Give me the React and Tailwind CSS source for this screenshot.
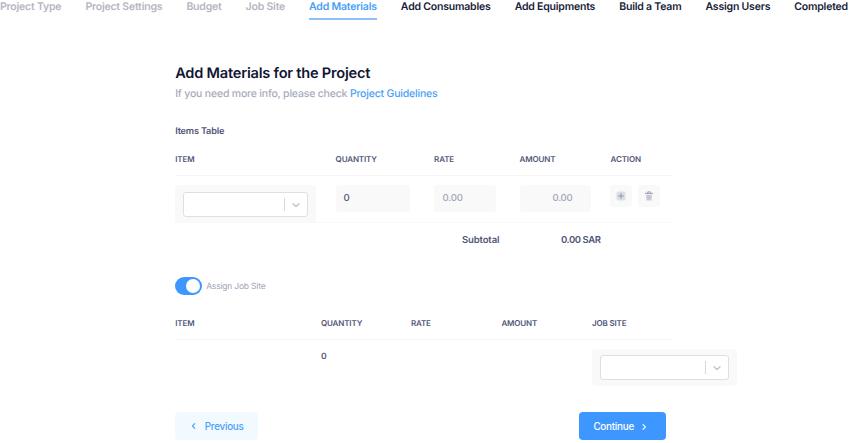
import React from "react";

const steps = [
  { label: "Project Type", state: "done" },
  { label: "Project Settings", state: "done" },
  { label: "Budget", state: "done" },
  { label: "Job Site", state: "done" },
  { label: "Add Materials", state: "current" },
  { label: "Add Consumables", state: "next" },
  { label: "Add Equipments", state: "next" },
  { label: "Build a Team", state: "next" },
  { label: "Assign Users", state: "next" },
  { label: "Completed", state: "next" },
];

const stepStyles = {
  done: "text-[#b5b5c3]",
  current: "text-[#4a9ff5] border-b-2 border-[#8cc2f8]",
  next: "text-[#181c3a]",
};

function Chevron({ className, d, strokeWidth = 1.4 }) {
  return (
    <svg viewBox="0 0 8 8" className={className} fill="none" stroke="currentColor" strokeWidth={strokeWidth} strokeLinecap="round" strokeLinejoin="round">
      <path d={d} />
    </svg>
  );
}

function Select({ className }) {
  return (
    <div className={`rounded-[4px] bg-[#f9f9f9] ${className}`}>
      <div className="flex h-[25px] items-center rounded-[3px] border border-[#dfdfe0] bg-white">
        <div className="flex-1" />
        <div className="h-[13px] w-px bg-[#d8d8d8]" />
        <div className="flex w-[22px] justify-center">
          <Chevron className="h-2 w-2 text-[#c4c4c4]" d="M1 2.8 4 5.6 7 2.8" />
        </div>
      </div>
    </div>
  );
}

function HeaderRow({ columns, labels }) {
  return (
    <div className={`grid h-[26px] w-[498px] border-b border-[#f6f6f7] text-[8px] leading-[18px] font-semibold tracking-[-0.13px] text-[#4f5578] ${columns}`}>
      {labels.map((label) => (
        <span key={label}>{label}</span>
      ))}
    </div>
  );
}

export default function App() {
  return (
    <div className="h-[443px] w-[849px] overflow-hidden bg-white font-['Inter',sans-serif] [text-rendering:geometricPrecision]">
      <nav className="flex h-[20px] w-[848px] justify-between text-[10.5px] leading-[14px] font-semibold tracking-[-0.2px] whitespace-nowrap">
        {steps.map((step) => (
          <span key={step.label} className={`h-[20px] ${stepStyles[step.state]}`}>
            {step.label}
          </span>
        ))}
      </nav>

      <main className="ml-[175.2px] pt-[42px]">
        <h1 className="h-[22px] text-[14.6px] leading-[23px] font-semibold tracking-[-0.22px] text-[#121633]">Add Materials for the Project</h1>
        <p className="h-[18px] text-[10.5px] leading-[19px] font-medium tracking-[-0.19px] text-[#a8abbd]">
          If you need more info, please check <a className="text-[#4a9ff5]">Project Guidelines</a>
        </p>

        <h2 className="mt-[20px] h-[18px] text-[9.2px] leading-[19px] font-semibold tracking-[-0.2px] text-[#4f5578]">Items Table</h2>

        <section className="mt-[10px]">
          <HeaderRow columns="grid-cols-[160.4px_98.5px_85.5px_91px_1fr]" labels={["ITEM", "QUANTITY", "RATE", "AMOUNT", "ACTION"]} />
          <div className="grid h-[47px] w-[498px] grid-cols-[160.4px_98.5px_85.5px_91px_1fr] items-start border-b border-[#f9f9f9] pt-[9px] text-[9.6px] font-medium tracking-[-0.2px]">
            <Select className="h-[38px] w-[141px] px-[8px] pt-[7px]" />
            <div className="h-[27px] w-[74px] rounded-[4px] bg-[#f9f9f9] px-[8px] leading-[28px] text-[#4f5578]">0</div>
            <div className="h-[27px] w-[62px] rounded-[4px] bg-[#f9f9f9] px-[8.5px] leading-[28px] text-[#a1a5b7]">0.00</div>
            <div className="h-[27px] w-[71px] rounded-[4px] bg-[#f9f9f9] pr-[18px] text-right leading-[28px] text-[#a1a5b7]">0.00</div>
            <div className="-ml-[0.3px] flex gap-[6px]">
              <div className="flex h-[22px] w-[22px] items-center justify-center rounded-[4px] bg-[#f9f9f9]">
                <svg viewBox="0 0 10 10" className="h-[10px] w-[10px]">
                  <rect x="0.5" y="0.5" width="9" height="9" rx="2" fill="#dcdfe8" />
                  <path d="M5 2.5V7.5M2.5 5H7.5" stroke="#9398ae" strokeWidth="1" strokeLinecap="round" />
                </svg>
              </div>
              <div className="flex h-[22px] w-[22px] items-center justify-center rounded-[4px] bg-[#f9f9f9]">
                <svg viewBox="0 0 10 10" className="h-[10px] w-[10px]">
                  <path d="M2 3.8H8L7.5 9A.7.7 0 0 1 6.8 9.6H3.2A.7.7 0 0 1 2.5 9Z" fill="#c9ccd7" />
                  <path d="M4.2 5.3V8M5.8 5.3V8" stroke="#b0b4c5" strokeWidth="0.5" />
                  <path d="M1 2.4H9M3.7 2.1V.9H6.3V2.1" fill="none" stroke="#9a9eb1" strokeWidth="1" />
                </svg>
              </div>
            </div>
          </div>
          <div className="flex h-[32px] text-[9.5px] leading-[35px] font-semibold tracking-[-0.12px] text-[#4f5578]">
            <span className="ml-[286.8px] w-[99px]">Subtotal</span>
            <span className="tracking-[-0.42px]">0.00 SAR</span>
          </div>
        </section>

        <div className="mt-[22px] flex h-[18px] items-center gap-[4px]">
          <div className="flex h-[18px] w-[27px] items-center justify-end rounded-full bg-[#3e97ff] pr-[2px]">
            <div className="h-[14px] w-[14px] rounded-full bg-white" />
          </div>
          <span className="pt-[2px] text-[8.5px] tracking-[-0.2px] text-[#a1a5b7]">Assign Job Site</span>
        </div>

        <section className="mt-[19px]">
          <HeaderRow columns="grid-cols-[145.7px_90px_90.5px_90.5px_1fr]" labels={["ITEM", "QUANTITY", "RATE", "AMOUNT", "JOB SITE"]} />
          <div className="flex h-[46px] pt-[9px]">
            <span className="ml-[145.7px] w-[271px] text-[8.6px] leading-[16px] font-semibold text-[#4f5578]">0</span>
            <Select className="h-[37px] w-[145px] px-[8px] pt-[6px]" />
          </div>
        </section>

        <div className="mt-[26px] flex w-[491px] justify-between text-[9.9px] font-medium tracking-[-0.26px]">
          <button className="flex h-[28px] w-[83px] items-center rounded-[4px] bg-[#f1faff] pl-[15px] text-[#4a9ff5]">
            <Chevron className="mr-[6.5px] h-2 w-2" d="M4.8 1.6 2.4 4 4.8 6.4" strokeWidth={1.1} />
            Previous
          </button>
          <button className="flex h-[28px] w-[87px] items-center rounded-[4px] bg-[#3e97ff] pl-[14.2px] text-white">
            Continue
            <Chevron className="mt-px ml-[6.5px] h-2 w-2" d="M3 1.6 5.4 4 3 6.4" strokeWidth={1.1} />
          </button>
        </div>
      </main>
    </div>
  );
}
